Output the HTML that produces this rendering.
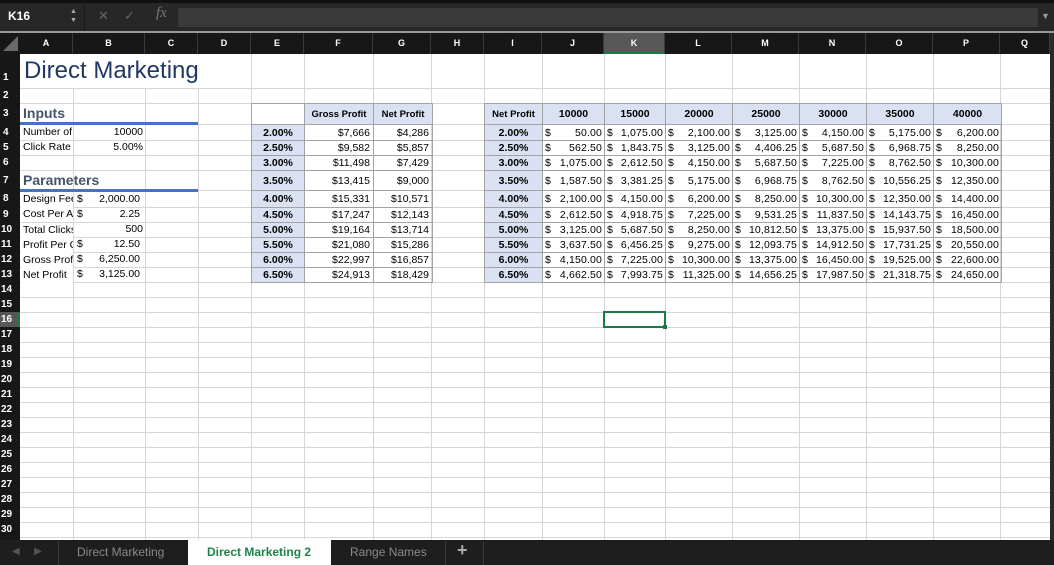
<!DOCTYPE html>
<html><head><meta charset="utf-8"><style>
*{margin:0;padding:0;box-sizing:border-box}
body{width:1054px;height:565px;overflow:hidden;background:#fff;font-family:"Liberation Sans",sans-serif;position:relative}
.a{position:absolute}
.vl{position:absolute;top:54px;height:486px;width:1px;background:#d6d6d6}
.hl{position:absolute;left:20px;width:1030px;height:1px;background:#d6d6d6}
.ch{position:absolute;top:33px;height:21px;color:#fff;font-size:9px;font-weight:bold;text-align:center;line-height:21px;border-right:1px solid #3a3a3a}
.rh{position:absolute;left:0;width:20px;color:#fff;font-size:10px;font-weight:bold;padding-left:3px;display:flex;align-items:center}
.t{position:absolute;font-size:10.5px;color:#000;white-space:nowrap;line-height:15px}
.lb{position:absolute;left:21px;width:52px;height:15px;background:#fff;overflow:hidden;white-space:nowrap;font-size:10.5px;line-height:15px;padding-left:2px}
table{position:absolute;border-collapse:collapse;table-layout:fixed;font-size:10.5px}
td{border:1px solid #a3a3a3;padding:0 3px;white-space:nowrap;overflow:hidden;text-align:right}
td.b{background:#d9e1f2;font-weight:bold;text-align:center}
td.h{background:#d9e1f2;font-weight:bold;text-align:center}
td.m{padding:0 2px;letter-spacing:0.15px}
td.m span{float:left}
</style></head><body>
<div class="a" style="left:0;top:0;width:1054px;height:33px;background:#272727;border-top:3px solid #111"></div>
<div class="a" style="left:8px;top:9px;color:#fff;font-size:12px;font-weight:bold">K16</div>
<div class="a" style="left:70px;top:7px;color:#aaa;font-size:7px;line-height:9px">▲<br>▼</div>
<div class="a" style="left:84px;top:3px;width:1px;height:30px;background:#1a1a1a"></div>
<div class="a" style="left:98px;top:8px;color:#666;font-size:13px">✕</div>
<div class="a" style="left:124px;top:8px;color:#666;font-size:13px">✓</div>
<div class="a" style="left:156px;top:5px;color:#777;font-size:15px;font-style:italic;font-family:'Liberation Serif',serif">fx</div>
<div class="a" style="left:178px;top:8px;width:860px;height:19px;background:#3a3a3a;border-radius:2px"></div>
<div class="a" style="left:1041px;top:11px;color:#999;font-size:9px">▼</div>
<div class="a" style="left:0;top:31px;width:1054px;height:2px;background:#9a9a9a"></div>
<div class="a" style="left:0;top:33px;width:1054px;height:21px;background:#171717"></div>
<div class="a" style="left:3px;top:36px;width:0;height:0;border-left:15px solid transparent;border-bottom:15px solid #6a6a6a"></div>
<div class="ch" style="left:20px;width:53px">A</div>
<div class="ch" style="left:73px;width:72px">B</div>
<div class="ch" style="left:145px;width:53px">C</div>
<div class="ch" style="left:198px;width:53px">D</div>
<div class="ch" style="left:251px;width:53px">E</div>
<div class="ch" style="left:304px;width:69px">F</div>
<div class="ch" style="left:373px;width:58px">G</div>
<div class="ch" style="left:431px;width:53px">H</div>
<div class="ch" style="left:484px;width:58px">I</div>
<div class="ch" style="left:542px;width:62px">J</div>
<div class="ch" style="left:604px;width:61px;background:#575757;border-bottom:2px solid #1d7a44">K</div>
<div class="ch" style="left:665px;width:67px">L</div>
<div class="ch" style="left:732px;width:67px">M</div>
<div class="ch" style="left:799px;width:67px">N</div>
<div class="ch" style="left:866px;width:67px">O</div>
<div class="ch" style="left:933px;width:67px">P</div>
<div class="ch" style="left:1000px;width:50px">Q</div>
<div class="a" style="left:0;top:54px;width:20px;height:486px;background:#171717"></div>
<div class="a" style="left:1050px;top:33px;width:4px;height:507px;background:#2a2a2a"></div>
<div class="vl" style="left:73px"></div><div class="vl" style="left:145px"></div><div class="vl" style="left:198px"></div><div class="vl" style="left:251px"></div><div class="vl" style="left:304px"></div><div class="vl" style="left:373px"></div><div class="vl" style="left:431px"></div><div class="vl" style="left:484px"></div><div class="vl" style="left:542px"></div><div class="vl" style="left:604px"></div><div class="vl" style="left:665px"></div><div class="vl" style="left:732px"></div><div class="vl" style="left:799px"></div><div class="vl" style="left:866px"></div><div class="vl" style="left:933px"></div><div class="vl" style="left:1000px"></div>
<div class="a" style="left:20px;top:55px;width:231px;height:33px;background:#fff"></div>
<div class="hl" style="top:88px"></div><div class="hl" style="top:103px"></div><div class="hl" style="top:124px"></div><div class="hl" style="top:140px"></div><div class="hl" style="top:155px"></div><div class="hl" style="top:170px"></div><div class="hl" style="top:190px"></div><div class="hl" style="top:207px"></div><div class="hl" style="top:222px"></div><div class="hl" style="top:237px"></div><div class="hl" style="top:252px"></div><div class="hl" style="top:267px"></div><div class="hl" style="top:282px"></div><div class="hl" style="top:297px"></div><div class="hl" style="top:312px"></div><div class="hl" style="top:327px"></div><div class="hl" style="top:342px"></div><div class="hl" style="top:357px"></div><div class="hl" style="top:372px"></div><div class="hl" style="top:387px"></div><div class="hl" style="top:402px"></div><div class="hl" style="top:417px"></div><div class="hl" style="top:432px"></div><div class="hl" style="top:447px"></div><div class="hl" style="top:462px"></div><div class="hl" style="top:477px"></div><div class="hl" style="top:492px"></div><div class="hl" style="top:507px"></div><div class="hl" style="top:522px"></div><div class="hl" style="top:537px"></div>
<div class="rh" style="top:54px;height:34px;padding-top:12px">1</div>
<div class="rh" style="top:88px;height:15px">2</div>
<div class="rh" style="top:103px;height:21px">3</div>
<div class="rh" style="top:124px;height:16px">4</div>
<div class="rh" style="top:140px;height:15px">5</div>
<div class="rh" style="top:155px;height:15px">6</div>
<div class="rh" style="top:170px;height:20px">7</div>
<div class="rh" style="top:190px;height:17px">8</div>
<div class="rh" style="top:207px;height:15px">9</div>
<div class="rh" style="top:222px;height:15px;padding-left:1px">10</div>
<div class="rh" style="top:237px;height:15px;padding-left:1px">11</div>
<div class="rh" style="top:252px;height:15px;padding-left:1px">12</div>
<div class="rh" style="top:267px;height:15px;padding-left:1px">13</div>
<div class="rh" style="top:282px;height:15px;padding-left:1px">14</div>
<div class="rh" style="top:297px;height:15px;padding-left:1px">15</div>
<div class="rh" style="top:312px;height:15px;padding-left:1px;background:#575757;border-right:2px solid #1d7a44">16</div>
<div class="rh" style="top:327px;height:15px;padding-left:1px">17</div>
<div class="rh" style="top:342px;height:15px;padding-left:1px">18</div>
<div class="rh" style="top:357px;height:15px;padding-left:1px">19</div>
<div class="rh" style="top:372px;height:15px;padding-left:1px">20</div>
<div class="rh" style="top:387px;height:15px;padding-left:1px">21</div>
<div class="rh" style="top:402px;height:15px;padding-left:1px">22</div>
<div class="rh" style="top:417px;height:15px;padding-left:1px">23</div>
<div class="rh" style="top:432px;height:15px;padding-left:1px">24</div>
<div class="rh" style="top:447px;height:15px;padding-left:1px">25</div>
<div class="rh" style="top:462px;height:15px;padding-left:1px">26</div>
<div class="rh" style="top:477px;height:15px;padding-left:1px">27</div>
<div class="rh" style="top:492px;height:15px;padding-left:1px">28</div>
<div class="rh" style="top:507px;height:15px;padding-left:1px">29</div>
<div class="rh" style="top:522px;height:15px;padding-left:1px">30</div>
<div class="a" style="left:24px;top:57px;font-size:24px;color:#203864">Direct Marketing</div>
<div class="a" style="left:23px;top:105px;font-size:14px;font-weight:bold;color:#44546a">Inputs</div>
<div class="a" style="left:20px;top:122px;width:178px;height:3px;background:#4472c4"></div>
<div class="a" style="left:23px;top:172px;font-size:14px;font-weight:bold;color:#44546a">Parameters</div>
<div class="a" style="left:20px;top:189px;width:178px;height:3px;background:#4472c4"></div>
<div class="lb" style="top:125px">Number of</div>
<div class="t" style="left:73px;top:125px;width:70px;text-align:right">10000</div>
<div class="t" style="left:23px;top:140px">Click Rate</div>
<div class="t" style="left:73px;top:140px;width:70px;text-align:right">5.00%</div>
<div class="lb" style="top:192px">Design Fee</div>
<div class="lb" style="top:207px">Cost Per Ad</div>
<div class="lb" style="top:223px">Total Clicks</div>
<div class="lb" style="top:238px">Profit Per Click</div>
<div class="lb" style="top:253px">Gross Profit</div>
<div class="lb" style="top:268px">Net Profit</div>
<div class="t" style="left:77px;top:192px">$</div><div class="t" style="left:73px;top:192px;width:67px;text-align:right">2,000.00</div>
<div class="t" style="left:77px;top:207px">$</div><div class="t" style="left:73px;top:207px;width:67px;text-align:right">2.25</div>
<div class="t" style="left:73px;top:222px;width:70px;text-align:right">500</div>
<div class="t" style="left:77px;top:237px">$</div><div class="t" style="left:73px;top:237px;width:67px;text-align:right">12.50</div>
<div class="t" style="left:77px;top:252px">$</div><div class="t" style="left:73px;top:252px;width:67px;text-align:right">6,250.00</div>
<div class="t" style="left:77px;top:267px">$</div><div class="t" style="left:73px;top:267px;width:67px;text-align:right">3,125.00</div>
<table style="left:251px;top:103px;width:181px">
<colgroup><col style="width:53px"><col style="width:69px"><col style="width:59px"></colgroup>
<tr style="height:21px"><td style="background:#fff"></td><td class="h" style="font-size:9.5px">Gross Profit</td><td class="h" style="font-size:9.5px">Net Profit</td></tr>
<tr style="height:16px"><td class="b">2.00%</td><td>$7,666</td><td>$4,286</td></tr>
<tr style="height:15px"><td class="b">2.50%</td><td>$9,582</td><td>$5,857</td></tr>
<tr style="height:15px"><td class="b">3.00%</td><td>$11,498</td><td>$7,429</td></tr>
<tr style="height:20px"><td class="b">3.50%</td><td>$13,415</td><td>$9,000</td></tr>
<tr style="height:17px"><td class="b">4.00%</td><td>$15,331</td><td>$10,571</td></tr>
<tr style="height:15px"><td class="b">4.50%</td><td>$17,247</td><td>$12,143</td></tr>
<tr style="height:15px"><td class="b">5.00%</td><td>$19,164</td><td>$13,714</td></tr>
<tr style="height:15px"><td class="b">5.50%</td><td>$21,080</td><td>$15,286</td></tr>
<tr style="height:15px"><td class="b">6.00%</td><td>$22,997</td><td>$16,857</td></tr>
<tr style="height:15px"><td class="b">6.50%</td><td>$24,913</td><td>$18,429</td></tr>
</table>
<table style="left:484px;top:103px;width:517px">
<colgroup><col style="width:58px"><col style="width:62px"><col style="width:61px"><col style="width:67px"><col style="width:67px"><col style="width:67px"><col style="width:67px"><col style="width:68px"></colgroup>
<tr style="height:21px"><td class="h" style="font-size:9.5px">Net Profit</td><td class="h">10000</td><td class="h">15000</td><td class="h">20000</td><td class="h">25000</td><td class="h">30000</td><td class="h">35000</td><td class="h">40000</td></tr>
<tr style="height:16px"><td class="b">2.00%</td><td class="m"><span>$</span>50.00</td><td class="m"><span>$</span>1,075.00</td><td class="m"><span>$</span>2,100.00</td><td class="m"><span>$</span>3,125.00</td><td class="m"><span>$</span>4,150.00</td><td class="m"><span>$</span>5,175.00</td><td class="m"><span>$</span>6,200.00</td></tr>
<tr style="height:15px"><td class="b">2.50%</td><td class="m"><span>$</span>562.50</td><td class="m"><span>$</span>1,843.75</td><td class="m"><span>$</span>3,125.00</td><td class="m"><span>$</span>4,406.25</td><td class="m"><span>$</span>5,687.50</td><td class="m"><span>$</span>6,968.75</td><td class="m"><span>$</span>8,250.00</td></tr>
<tr style="height:15px"><td class="b">3.00%</td><td class="m"><span>$</span>1,075.00</td><td class="m"><span>$</span>2,612.50</td><td class="m"><span>$</span>4,150.00</td><td class="m"><span>$</span>5,687.50</td><td class="m"><span>$</span>7,225.00</td><td class="m"><span>$</span>8,762.50</td><td class="m"><span>$</span>10,300.00</td></tr>
<tr style="height:20px"><td class="b">3.50%</td><td class="m"><span>$</span>1,587.50</td><td class="m"><span>$</span>3,381.25</td><td class="m"><span>$</span>5,175.00</td><td class="m"><span>$</span>6,968.75</td><td class="m"><span>$</span>8,762.50</td><td class="m"><span>$</span>10,556.25</td><td class="m"><span>$</span>12,350.00</td></tr>
<tr style="height:17px"><td class="b">4.00%</td><td class="m"><span>$</span>2,100.00</td><td class="m"><span>$</span>4,150.00</td><td class="m"><span>$</span>6,200.00</td><td class="m"><span>$</span>8,250.00</td><td class="m"><span>$</span>10,300.00</td><td class="m"><span>$</span>12,350.00</td><td class="m"><span>$</span>14,400.00</td></tr>
<tr style="height:15px"><td class="b">4.50%</td><td class="m"><span>$</span>2,612.50</td><td class="m"><span>$</span>4,918.75</td><td class="m"><span>$</span>7,225.00</td><td class="m"><span>$</span>9,531.25</td><td class="m"><span>$</span>11,837.50</td><td class="m"><span>$</span>14,143.75</td><td class="m"><span>$</span>16,450.00</td></tr>
<tr style="height:15px"><td class="b">5.00%</td><td class="m"><span>$</span>3,125.00</td><td class="m"><span>$</span>5,687.50</td><td class="m"><span>$</span>8,250.00</td><td class="m"><span>$</span>10,812.50</td><td class="m"><span>$</span>13,375.00</td><td class="m"><span>$</span>15,937.50</td><td class="m"><span>$</span>18,500.00</td></tr>
<tr style="height:15px"><td class="b">5.50%</td><td class="m"><span>$</span>3,637.50</td><td class="m"><span>$</span>6,456.25</td><td class="m"><span>$</span>9,275.00</td><td class="m"><span>$</span>12,093.75</td><td class="m"><span>$</span>14,912.50</td><td class="m"><span>$</span>17,731.25</td><td class="m"><span>$</span>20,550.00</td></tr>
<tr style="height:15px"><td class="b">6.00%</td><td class="m"><span>$</span>4,150.00</td><td class="m"><span>$</span>7,225.00</td><td class="m"><span>$</span>10,300.00</td><td class="m"><span>$</span>13,375.00</td><td class="m"><span>$</span>16,450.00</td><td class="m"><span>$</span>19,525.00</td><td class="m"><span>$</span>22,600.00</td></tr>
<tr style="height:15px"><td class="b">6.50%</td><td class="m"><span>$</span>4,662.50</td><td class="m"><span>$</span>7,993.75</td><td class="m"><span>$</span>11,325.00</td><td class="m"><span>$</span>14,656.25</td><td class="m"><span>$</span>17,987.50</td><td class="m"><span>$</span>21,318.75</td><td class="m"><span>$</span>24,650.00</td></tr>
</table>
<div class="a" style="left:603px;top:311px;width:63px;height:17px;border:2px solid #1d7a44"></div>
<div class="a" style="left:663px;top:325px;width:4px;height:4px;background:#1d7a44"></div>
<div class="a" style="left:0;top:540px;width:1054px;height:25px;background:#1e1e1e"></div>
<div class="a" style="left:12px;top:546px;color:#555;font-size:10px">◀</div>
<div class="a" style="left:34px;top:546px;color:#555;font-size:10px">▶</div>
<div class="a" style="left:58px;top:541px;width:1px;height:24px;background:#3a3a3a"></div>
<div class="a" style="left:77px;top:545px;color:#8a8a8a;font-size:12px">Direct Marketing</div>
<div class="a" style="left:188px;top:540px;width:143px;height:25px;background:#fff"></div>
<div class="a" style="left:207px;top:545px;color:#1e8449;font-size:12px;font-weight:bold">Direct Marketing 2</div>
<div class="a" style="left:350px;top:545px;color:#8a8a8a;font-size:12px">Range Names</div>
<div class="a" style="left:445px;top:541px;width:1px;height:24px;background:#3a3a3a"></div>
<div class="a" style="left:457px;top:540px;color:#aaa;font-size:18px;font-weight:bold">+</div>
<div class="a" style="left:483px;top:541px;width:1px;height:24px;background:#3a3a3a"></div>
</body></html>
